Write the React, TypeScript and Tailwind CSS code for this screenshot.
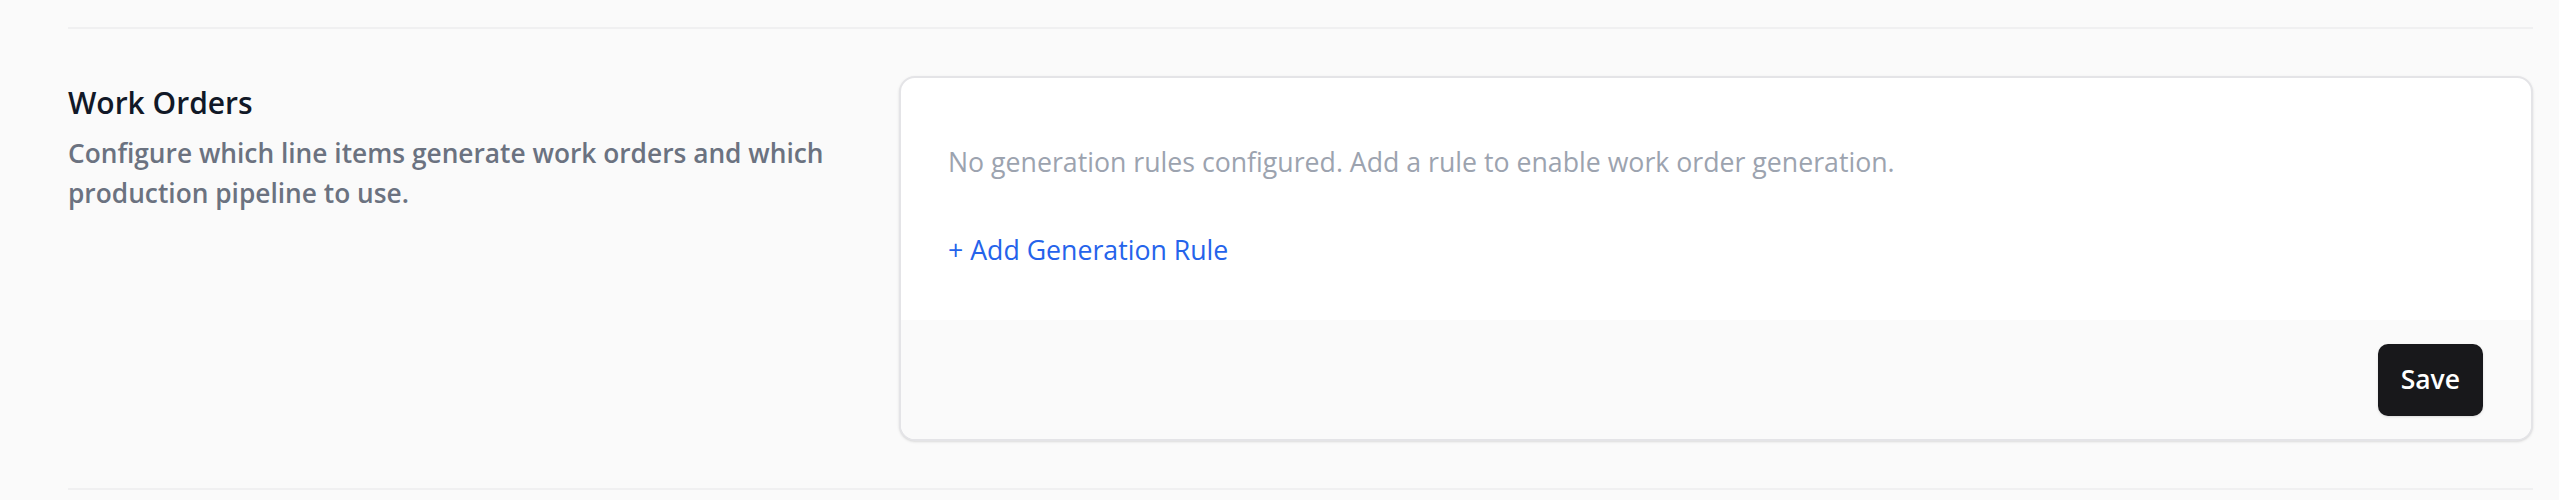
import React from 'react';

const WorkOrdersSettings: React.FC = () => {
  return (
    <div className="grid grid-cols-[803px_1fr] gap-x-[28px] border-y-2 border-[#f0f0f1] py-[47px]">
      {/* Section description */}
      <div className="pt-[4px]">
        <h2 className="text-[30px] leading-[45px] font-semibold text-[#111827]">Work Orders</h2>
        <p className="mt-[8px] text-[26.3px] leading-[40px] font-semibold text-[#6b7280]">
          Configure which line items generate work orders and which production pipeline to use.
        </p>
      </div>

      {/* Rules card */}
      <div className="rounded-[16px] border-2 border-[#e4e4e7] bg-white overflow-hidden shadow-sm">
        <div className="px-[47px] pt-[64px] pb-[50px]">
          <p className="text-[26.7px] leading-[40px] text-[#9ca3af]">
            No generation rules configured. Add a rule to enable work order generation.
          </p>
          <button className="mt-[48px] block text-[26.7px] leading-[40px] text-[#2563eb] hover:text-blue-700">
            + Add Generation Rule
          </button>
        </div>

        <div className="bg-[#fafafa] px-[48px] pt-[24px] pb-[23px] flex justify-end">
          <button className="h-[72px] px-[23px] rounded-[10px] bg-[#18181b] text-white text-[26.5px] font-semibold shadow-sm">
            Save
          </button>
        </div>
      </div>
    </div>
  );
};

export default function App() {
  return (
    <div className="min-h-[500px] w-full bg-[#fafafa] pl-[68px] pr-[26px] pt-[27px] font-['Open_Sans',sans-serif]">
      <WorkOrdersSettings />
    </div>
  );
}
